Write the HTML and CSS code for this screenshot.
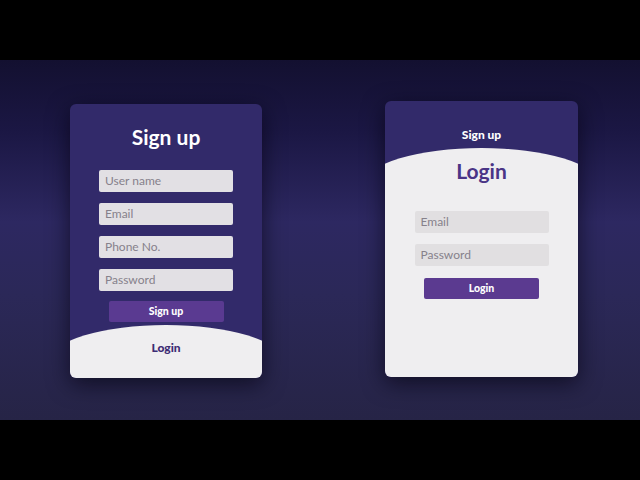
FILE: index.html
```html
<!DOCTYPE html>
<html>
<head>
<meta charset="utf-8">
<link rel="stylesheet" href="styles.css">
</head>
<body>
<div class="frame">
  <div class="card card-signup">
    <h1 class="title title-light">Sign up</h1>
    <div class="form">
      <div class="field">User name</div>
      <div class="field">Email</div>
      <div class="field">Phone No.</div>
      <div class="field">Password</div>
      <div class="btn">Sign up</div>
    </div>
    <div class="curve curve-bottom">
      <div class="link link-dark">Login</div>
    </div>
  </div>
  <div class="card card-login">
    <div class="head">
      <div class="link link-light">Sign up</div>
    </div>
    <div class="curve curve-full">
      <h1 class="title title-dark">Login</h1>
      <div class="form form-login">
        <div class="field field-alt">Email</div>
        <div class="field field-alt">Password</div>
        <div class="btn btn-login">Login</div>
      </div>
    </div>
  </div>
</div>
</body>
</html>
```

FILE: styles.css
```css
html, body {
  margin: 0;
  padding: 0;
  background: #000;
  width: 640px;
  height: 480px;
  overflow: hidden;
  font-family: "Lato", "Noto Sans", sans-serif;
}
.frame {
  margin-top: 60px;
  height: 360px;
  box-sizing: border-box;
  padding: 41px 0 0 70px;
  display: flex;
  align-items: flex-start;
  gap: 123px;
  background: linear-gradient(180deg, #131030 0%, #1b1744 20%, #2d2861 45%, #2b2858 65%, #262446 100%);
}
.card {
  position: relative;
  overflow: hidden;
  border-radius: 6px;
  background: #322a6a;
  box-shadow: 0 6px 22px rgba(5, 3, 15, 0.65);
  display: flex;
  flex-direction: column;
  align-items: center;
}
.card-signup {
  width: 192px;
  height: 274px;
  margin-top: 3px;
}
.card-login {
  width: 193px;
  height: 276px;
}
.title {
  margin: 0;
  font-size: 21px;
  line-height: 24px;
  font-weight: 700;
  text-align: center;
}
.title-light {
  color: #ffffff;
  margin-top: 21px;
}
.title-dark {
  color: #4a3486;
  margin-top: 11px;
}
.form {
  display: flex;
  flex-direction: column;
  align-items: center;
  margin-top: 21px;
}
.form-login {
  margin-top: 28px;
}
.field {
  width: 134px;
  height: 22px;
  box-sizing: border-box;
  padding-left: 6px;
  margin-bottom: 11px;
  border-radius: 2px;
  background: #e2e0e4;
  color: #86818b;
  font-size: 12px;
  line-height: 22px;
}
.field:nth-child(4) {
  margin-bottom: 10px;
}
.field-alt {
  background: #e1dfe1;
}
.form-login .field:nth-child(2) {
  margin-bottom: 12px;
}
.btn {
  width: 115px;
  height: 21px;
  border-radius: 2px;
  background: #5a3a91;
  color: #ffffff;
  font-size: 10.5px;
  font-weight: 900;
  line-height: 21px;
  text-align: center;
}
.btn-login {
  background: #5b3a90;
}
.curve {
  background: #efeef0;
  width: 120%;
  border-radius: 50% 50% 0 0 / 35px 35px 0 0;
  display: flex;
  flex-direction: column;
  align-items: center;
}
.curve-bottom {
  margin-top: auto;
  height: 53px;
}
.curve-full {
  flex: 1;
}
.head {
  height: 47px;
  box-sizing: border-box;
  padding-top: 26px;
}
.link {
  font-size: 12px;
  line-height: 16px;
  font-weight: 900;
  text-align: center;
}
.link-dark {
  color: #3d2c74;
  margin-top: 15px;
}
.link-light {
  color: #ffffff;
}
```
